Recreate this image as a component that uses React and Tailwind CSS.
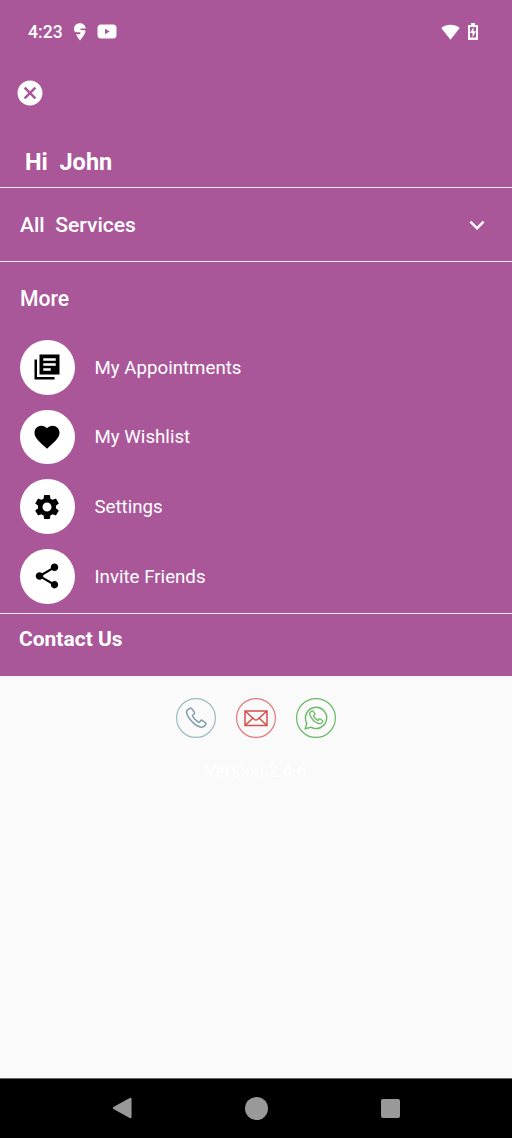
import React from 'react';
import { MdCancel, MdFavorite, MdSettings, MdShare, MdExpandMore } from 'react-icons/md';

const LibraryIcon = ({ size = 30 }) => (
    <svg width={size} height={size} viewBox="0 0 24 24" fill="currentColor">
        <path d="M4 6H2v16h16v-2H4V6z" />
        <path d="M22 2H6v16h16V2zm-3 9H9V9h10v2zm-4 4H9v-2h6v2zm4-8H9V5h10v2z" />
    </svg>
);

const menuItems = [
    { label: 'My Appointments', icon: LibraryIcon },
    { label: 'My Wishlist', icon: MdFavorite },
    { label: 'Settings', icon: MdSettings },
    { label: 'Invite Friends', icon: MdShare },
];

const StatusBar = () => (
    <div className="h-[63px] pl-7 pr-[34.500px] flex items-center justify-between text-white">
        <div className="flex items-center">
            <span className="w-[46px] text-[17.600px] font-medium leading-5">4:23</span>
            <svg width="12" height="18" viewBox="0 0 12 18">
                <path
                    d="M6 .3C2.600.300 0 2.700 0 6c0 1 .2 1.900.6 2.600.3.500.8.700 1.400.700h4.300v1.900H2c1 2.200 2.400 4.200 4 6.200 2.200-2.600 4.600-5.500 5.400-8.300.3-1.100 0-1.700-1-1.900-1.300-.2-2.700-.2-3.900-.2V5.500h5.200C11.500 2.400 9.100.300 6 .3z"
                    fill="white"
                />
            </svg>
            <svg className="ml-[11px]" width="20" height="15" viewBox="0 0 20 15">
                <rect x=".5" y=".5" width="19" height="14" rx="3.500" fill="white" />
                <path d="M8 4.800v5.400l4.700-2.700z" fill="#aa579a" />
            </svg>
        </div>
        <div className="flex items-center">
            <svg width="19" height="16" viewBox="0 0 19 16">
                <path d="M.3 4C5.500-.4 13.500-.4 18.700 4L9.500 15.800z" fill="white" />
            </svg>
            <svg className="ml-2" width="10" height="17" viewBox="0 0 10 17">
                <path d="M3 0h4v2h2.200q.8 0 .8.800v13.400q0 .8-.8.800H.8q-.8 0-.8-.8V2.800Q0 2 .8 2H3z" fill="white" />
                <path d="M2 4h6v10.500H2z" fill="#aa579a" />
                <path d="M5.500 4L2 10h2.500v4.500L8 8.300H5.500z" fill="white" />
            </svg>
        </div>
    </div>
);

const MenuItem = ({ label, icon: Icon }) => (
    <div className="flex items-center gap-5 text-white">
        <div className="size-[54.500px] rounded-full bg-white text-black flex items-center justify-center">
            <Icon size={30} />
        </div>
        <span className="pt-px text-[18.700px] leading-6">{label}</span>
    </div>
);

const ContactIcons = () => (
    <div className="flex justify-center gap-5">
        <svg width="40" height="40" viewBox="0 0 40 40" fill="none">
            <circle cx="20" cy="20" r="19.400" stroke="#9dbbc0" strokeWidth="1.200" />
            <path
                d="M11.300 12.200l2.500-1.900c.7-.5 1.400-.3 1.900.3l2.600 3.500c.5.700.4 1.400-.2 1.900l-1.300 1c-.4.3-.4.800-.1 1.300 1.500 2.400 3.300 4.200 5.600 5.800.5.300 1 .3 1.300-.1l1-1.300c.5-.6 1.200-.7 1.900-.2l3 2.300c.6.500.7 1.100.3 1.700-1.200 2-2.900 3.100-5.100 2.700-3-.6-6.800-3.200-9.600-6.600-2.400-2.900-4.300-5.800-4.600-8.200-.100-.9.200-1.700.8-2.200z"
                stroke="#7e9dac"
                strokeWidth="1.500"
            />
        </svg>
        <svg width="40" height="40" viewBox="0 0 40 40" fill="none">
            <circle cx="20" cy="20" r="19.400" stroke="#e27976" strokeWidth="1.200" />
            <path
                d="M9 13h22v14.500H9zM9 13l9.500 8.500q1.500 1.200 3 0L31 13M9 27.500l7.800-7.300M31 27.500l-7.800-7.300"
                stroke="#d34f4b"
                strokeWidth="1.500"
            />
        </svg>
        <svg width="40" height="40" viewBox="0 0 40 40" fill="none" stroke="#69b964">
            <circle cx="20" cy="20" r="19.400" strokeWidth="1.200" />
            <path d="M9.300 30.700l1.500-5.600a10.600 10.600 0 1 1 4.100 4.100z" strokeWidth="1.400" />
            <path
                d="M14.300 14.200l1.500-1.100c.5-.4 1.100-.2 1.500.3l1.500 2.100c.3.500.2 1-.2 1.300l-.8.600c-.3.300-.3.600-.1 1 1 1.600 2.200 2.800 3.700 3.700.4.200.7.200.9-.1l.6-.8c.4-.5.9-.5 1.400-.2l2.100 1.500c.5.400.5.800.2 1.300-.9 1.600-2.200 2.200-4 1.700-4-1.200-7.300-4.800-8.800-8.700-.4-1.100-.2-2.100.5-2.600z"
                strokeWidth="1.300"
            />
        </svg>
    </div>
);

const NavigationBar = () => (
    <div className="h-[60px] pb-px bg-black border-t border-[#666] flex items-center justify-center gap-[111px]">
        <svg width="23" height="22" viewBox="0 0 23 22" fill="#999" stroke="#999" strokeLinejoin="round">
            <path d="M3 11L19.300 2v18z" strokeWidth="2.500" />
        </svg>
        <div className="size-[23px] rounded-full bg-[#999]" />
        <div className="w-[23px] flex justify-center">
            <div className="size-[19px] shrink-0 rounded-[2px] bg-[#999]" />
        </div>
    </div>
);

const App = () => (
    <div className="w-[512px] h-[1138px] flex flex-col overflow-hidden bg-[#fafafa] font-[Roboto,sans-serif]">
        <div className="h-[676px] shrink-0 bg-[#aa579a] text-white">
            <StatusBar />
            <header className="h-[125px] border-b border-[#fbeafa]">
                <button className="block pt-[15px] pl-[14.500px]" title="Close">
                    <MdCancel size={30} />
                </button>
                <h1 className="pt-[38px] pl-[25px] text-[23.500px] leading-[33px] font-bold whitespace-pre">Hi  John</h1>
            </header>
            <div className="h-[74px] pl-5 pr-5 flex items-center justify-between border-b border-[#fbeafa]">
                <span className="text-[21.100px] font-medium whitespace-pre">All  Services</span>
                <MdExpandMore size={30} />
            </div>
            <section className="h-[352px] pl-5 border-b border-[#fbeafa]">
                <h2 className="h-[78px] pt-[21px] text-[21.200px] leading-8 font-medium">More</h2>
                <div className="flex flex-col gap-[15.200px]">
                    {menuItems.map((item) => (
                        <MenuItem key={item.label} {...item} />
                    ))}
                </div>
            </section>
            <h2 className="pl-[19px] pt-[9px] text-[21px] leading-8 font-bold">Contact Us</h2>
        </div>
        <main className="flex-1 pt-[22px]">
            <ContactIcons />
            <p className="mt-[21px] text-center text-[17.500px] leading-6 text-white">Version:2.4.6</p>
        </main>
        <NavigationBar />
    </div>
);

export default App;
